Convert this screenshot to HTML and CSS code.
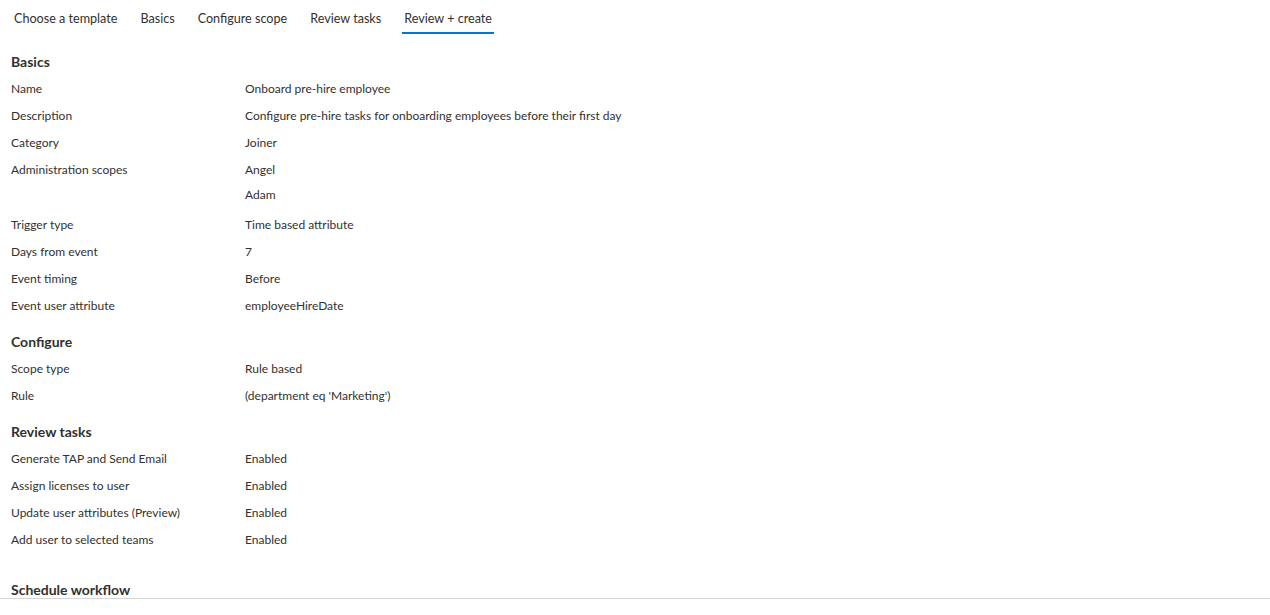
FILE: index.html
```html
<!DOCTYPE html>
<html lang="en">
<head>
    <meta charset="UTF-8">
    <title>Review + create</title>
    <link rel="stylesheet" href="styles.css">
</head>
<body>
    <div class="tabs">
        <div class="tab">Choose a template</div>
        <div class="tab">Basics</div>
        <div class="tab">Configure scope</div>
        <div class="tab">Review tasks</div>
        <div class="tab active">Review + create</div>
    </div>

    <div class="content">
        <div class="section">
            <h2>Basics</h2>
            <div class="row"><div class="label">Name</div><div class="value">Onboard pre-hire employee</div></div>
            <div class="row"><div class="label">Description</div><div class="value">Configure pre-hire tasks for onboarding employees before their first day</div></div>
            <div class="row"><div class="label">Category</div><div class="value">Joiner</div></div>
            <div class="row multi">
                <div class="label">Administration scopes</div>
                <div class="value list">
                    <span>Angel</span>
                    <span>Adam</span>
                </div>
            </div>
            <div class="row"><div class="label">Trigger type</div><div class="value">Time based attribute</div></div>
            <div class="row"><div class="label">Days from event</div><div class="value">7</div></div>
            <div class="row"><div class="label">Event timing</div><div class="value">Before</div></div>
            <div class="row"><div class="label">Event user attribute</div><div class="value">employeeHireDate</div></div>
        </div>

        <div class="section">
            <h2>Configure</h2>
            <div class="row"><div class="label">Scope type</div><div class="value">Rule based</div></div>
            <div class="row"><div class="label">Rule</div><div class="value">(department eq 'Marketing')</div></div>
        </div>

        <div class="section">
            <h2>Review tasks</h2>
            <div class="row"><div class="label">Generate TAP and Send Email</div><div class="value">Enabled</div></div>
            <div class="row"><div class="label">Assign licenses to user</div><div class="value">Enabled</div></div>
            <div class="row"><div class="label">Update user attributes (Preview)</div><div class="value">Enabled</div></div>
            <div class="row"><div class="label">Add user to selected teams</div><div class="value">Enabled</div></div>
        </div>

        <div class="section last">
            <h2>Schedule workflow</h2>
        </div>
    </div>
</body>
</html>
```

FILE: styles.css
```css
body {
    margin: 0;
    font-family: Lato, "Open Sans", sans-serif;
    font-size: 12px;
    color: #323130;
    background-color: white;
}
.tabs {
    display: flex;
    gap: 19px;
    padding: 0 0 0 12px;
    height: 34px;
}
.tab {
    padding: 10px 2px 0;
    font-size: 12.6px;
    line-height: 17px;
    height: 26px;
    box-sizing: border-box;
    color: #323130;
    white-space: nowrap;
}
.tab.active {
    border-bottom: 2px solid #0078d4;
    height: 34px;
}
.content {
    padding: 18px 11px 0;
    border-bottom: 1px solid #d6d6d6;
}
.section h2 {
    margin: 0;
    font-size: 14px;
    font-weight: 700;
    line-height: 19px;
    padding-bottom: 4px;
}
.section {
    margin-bottom: 13px;
}
.row {
    display: flex;
    line-height: 17px;
    padding: 5px 0;
}
.label {
    width: 234px;
    flex-shrink: 0;
}
.list {
    display: flex;
    flex-direction: column;
    gap: 8px;
}
.row.multi {
    padding-bottom: 8px;
}
.section.last {
    margin-top: 29px;
    margin-bottom: 0;
}
.section.last h2 {
    line-height: 16px;
    padding-bottom: 0;
}
```
